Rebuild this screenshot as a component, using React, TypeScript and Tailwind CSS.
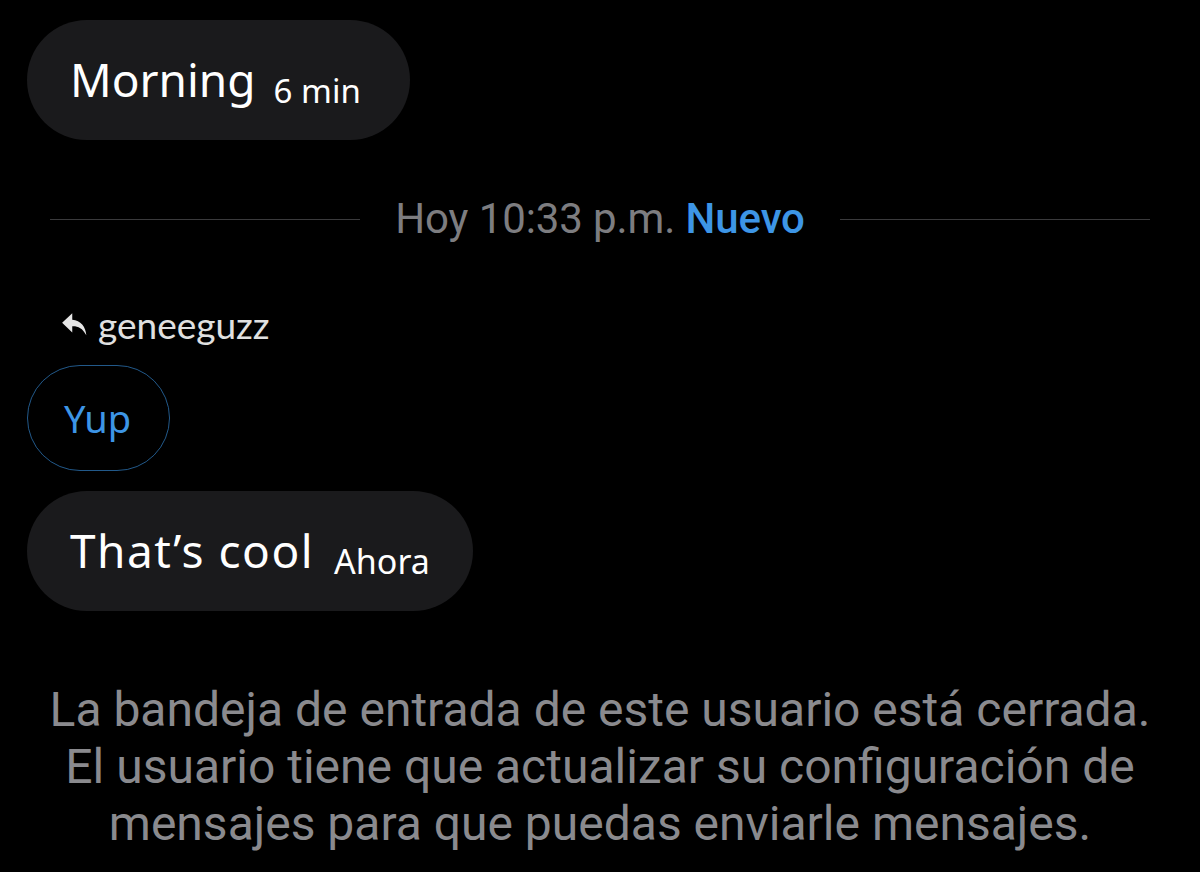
import React from "react";

function ReplyIcon() {
  return (
    <svg width="27" height="25" viewBox="0 0 24 22" fill="#e6e6e6">
      <path d="M10 1 L1 9.5 L10 18 L10 12.5 C15 12.3 19 14 22.5 20.5 C22 13 17.5 7.3 10 6.7 Z" />
    </svg>
  );
}

export default function App() {
  return (
    <div className="w-[1200px] h-[872px] bg-black overflow-hidden flex flex-col" style={{ fontFamily: '"Noto Sans", sans-serif' }}>
      <div className="pl-[27px] pt-[20px]">
        <div className="inline-flex items-baseline h-[120px] rounded-full bg-[#1a1a1c] pl-[43px] pr-[49px] pt-[31px]">
          <span className="text-[46px] leading-[56px] text-white">Morning</span>
          <span className="ml-[18px] text-[33px] text-white relative top-[6px]">6 min</span>
        </div>
      </div>

      <div className="flex items-center mt-[58px] px-[50px] h-[42px]" style={{ fontFamily: 'Roboto, sans-serif' }}>
        <div className="flex-1 h-px bg-[#3a3a3c]" />
        <div className="px-[35px] text-[42px] tracking-[-0.1px] leading-none text-[#7d7d80] whitespace-nowrap">
          Hoy 10:33 p.m. <span className="text-[#3d95e6] font-medium">Nuevo</span>
        </div>
        <div className="flex-1 h-px bg-[#3a3a3c]" />
      </div>

      <div className="flex items-center pl-[61px] mt-[68px] h-[32px] gap-[10px]">
        <ReplyIcon />
        <span className="text-[37px] leading-none text-[#e0e0e0]" style={{ fontFamily: 'Lato, sans-serif' }}>geneeguzz</span>
      </div>

      <div className="pl-[27px] mt-[25px]">
        <div className="inline-flex items-center h-[106px] rounded-full border-[1.5px] border-[#22598a] pl-[36px] pr-[38px]">
          <span className="text-[38px] text-[#3d95e6]">Yup</span>
        </div>
      </div>

      <div className="pl-[27px] mt-[20px]">
        <div className="inline-flex items-baseline h-[120px] rounded-full bg-[#1a1a1c] pl-[43px] pr-[43px] pt-[31px]">
          <span className="text-[46px] leading-[56px] tracking-[1.5px] text-white">That’s cool</span>
          <span className="ml-[20px] text-[34px] text-white relative top-[6px]">Ahora</span>
        </div>
      </div>

      <div className="mt-[70px] text-center text-[48px] leading-[57px] text-[#8a8a8e]" style={{ fontFamily: 'Roboto, sans-serif' }}>
        <div>La bandeja de entrada de este usuario está cerrada.</div>
        <div>El usuario tiene que actualizar su configuración de</div>
        <div>mensajes para que puedas enviarle mensajes.</div>
      </div>
    </div>
  );
}
